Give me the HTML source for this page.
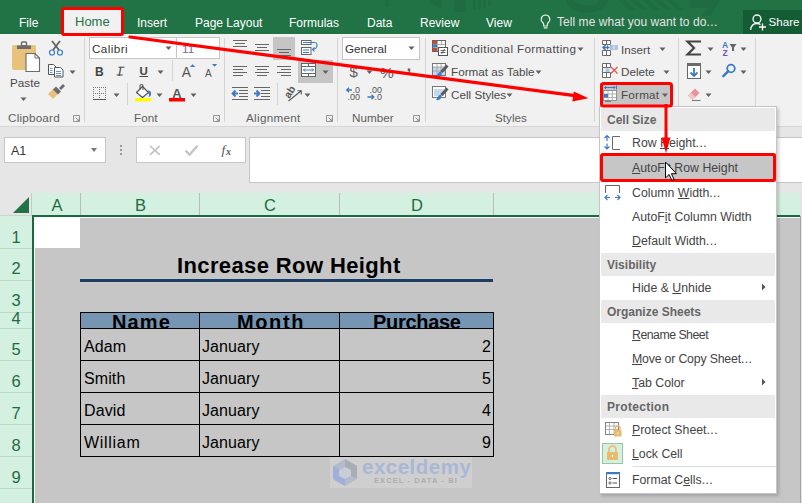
<!DOCTYPE html>
<html><head><meta charset="utf-8">
<style>
*{margin:0;padding:0;box-sizing:border-box}
html,body{width:802px;height:503px;overflow:hidden;background:#c6c6c6}
body{position:relative;font-family:"Liberation Sans",sans-serif;color:#444}
.a{position:absolute}
.t{position:absolute;white-space:pre;line-height:1}
#tabs{left:0;top:0;width:802px;height:34px;background:#217346}
.tab{position:absolute;top:16.5px;font-size:12px;color:#fff;white-space:pre;line-height:1}
#ribbon{left:0;top:34px;width:802px;height:93px;background:#f1f1f1;border-bottom:1px solid #d6d6d6}
.rl{position:absolute;font-size:11.7px;color:#4a4a4a;white-space:pre;line-height:1}
.gl{position:absolute;top:112px;font-size:11.7px;color:#606060;white-space:pre;line-height:1}
.sep{position:absolute;width:1px;background:#d4d4d4}
.dd{position:absolute;width:0;height:0;border-left:3.5px solid transparent;border-right:3.5px solid transparent;border-top:4px solid #5a5a5a}
#fbar{left:0;top:127px;width:802px;height:66px;background:#e6e6e6}
.colh{position:absolute;top:193px;height:22px;background:#d3f0e0;color:#1e6b41;font-size:13px}
.rowh{position:absolute;left:0;width:32px;background:#d3f0e0;color:#1e6b41;font-size:13px;border-bottom:1px solid #b9d6c6}
.cell{position:absolute;font-size:16px;letter-spacing:0.1px;color:#000;white-space:pre;line-height:1}
.menu{left:599px;top:106px;width:178px;height:388px;background:#fff;border:1px solid #c6c6c6;box-shadow:2px 2px 3px rgba(0,0,0,0.18)}
.mh{position:absolute;left:1px;width:174px;height:23px;background:#e9e9e9}
.mht{position:absolute;left:7px;font-size:12px;font-weight:bold;color:#666;white-space:pre;line-height:1}
.mi{position:absolute;left:32px;font-size:12.3px;color:#444;white-space:pre;line-height:1}
.red{position:absolute;border:3px solid #ff0000;border-radius:2px}
</style></head><body>

<!-- TAB BAR -->
<div id="tabs" class="a">

  <svg class="a" style="left:370px;top:0" width="370" height="34" viewBox="370 0 370 34">
   <g fill="#1f6c42">
    <rect x="385" y="0" width="4" height="7"/>
    <path d="M430 0h12v9l-12-6z"/>
    <rect x="454" y="0" width="12" height="12"/>
    <path d="M473 0h3v10h-3zM478 0h3v9h-3zM483 0h3v8h-3zM488 0h3v6h-3z"/>
    <path d="M566 0a20 12 0 0 0 42 0h-9a11 5 0 0 1-24 0z"/>
    <path d="M618 0l12 10h6l-12-10zM630 0l12 10h6l-12-10zM642 0l12 10h6l-12-10zM654 0l12 10h6l-12-10zM666 0l12 10h6l-12-10z"/>
    <path d="M690 0h30l-10 16h-8l6-8h-18z"/>
   </g>
  </svg>
  <div class="a" style="left:64px;top:10px;width:57px;height:24px;background:#f1f1f1"></div>
  <div class="tab" style="left:19px">File</div>
  <div class="tab" style="left:75px;top:14.8px;font-size:13px;color:#217346">Home</div>
  <div class="tab" style="left:137px">Insert</div>
  <div class="tab" style="left:195px">Page Layout</div>
  <div class="tab" style="left:289px">Formulas</div>
  <div class="tab" style="left:367px">Data</div>
  <div class="tab" style="left:420px">Review</div>
  <div class="tab" style="left:486px">View</div>
  <svg class="a" style="left:540px;top:13.5px" width="13" height="16" viewBox="0 0 13 16"><path d="M5.5 1a4.3 4.3 0 0 0-2.8 7.5c.6.6 1 1.3 1 2.2V12h3.6v-1.3c0-.9.4-1.6 1-2.2A4.3 4.3 0 0 0 5.5 1z M3.8 13.8h3.6" fill="none" stroke="#f0f0f0" stroke-width="1.2"/></svg>
  <div class="tab" style="left:557px;top:15.7px;color:#e4e4e4;letter-spacing:0.05px">Tell me what you want to do<span style="letter-spacing:0.4px">...</span></div>
  <div class="a" style="left:743px;top:10px;width:59px;height:24px;background:#145c34"></div>
  <svg class="a" style="left:749px;top:13px" width="18" height="18" viewBox="0 0 18 18"><circle cx="8" cy="6" r="4" fill="none" stroke="#fff" stroke-width="1.3"/><path d="M1.5 17c.5-4 3-6.5 6.5-6.5 1.5 0 2.6.4 3.5 1" fill="none" stroke="#fff" stroke-width="1.3"/><path d="M13.5 10.5v7M10 14h7" stroke="#fff" stroke-width="1.3"/></svg>
  <div class="tab" style="left:768.5px;top:15.8px;font-size:11.6px">Share</div>
</div>

<!-- RIBBON -->
<div id="ribbon" class="a"></div>


<!-- RIBBON CONTENT -->
<div class="a" style="left:89px;top:37px;width:88px;height:22px;background:#fff;border:1px solid #c6c6c6"></div>
<div class="a" style="left:176px;top:37px;width:44px;height:22px;background:#fff;border:1px solid #c6c6c6"></div>
<div class="a" style="left:342px;top:37px;width:78px;height:23px;background:#fff;border:1px solid #c6c6c6"></div>
<div class="a" style="left:273px;top:37px;width:22px;height:23px;background:#c5c5c5"></div>
<div class="a" style="left:298px;top:60px;width:35px;height:23px;background:#c5c5c5"></div>
<div class="a" style="left:600px;top:83px;width:72px;height:24px;background:#c5c5c5"></div>

<div class="sep" style="left:84px;top:38px;height:84px"></div>
<div class="sep" style="left:224px;top:38px;height:84px"></div>
<div class="sep" style="left:337px;top:38px;height:84px"></div>
<div class="sep" style="left:425px;top:38px;height:84px"></div>
<div class="sep" style="left:594px;top:38px;height:84px"></div>
<div class="sep" style="left:678px;top:38px;height:84px"></div>
<div class="sep" style="left:755px;top:38px;height:84px"></div>
<div class="sep" style="left:172px;top:60px;height:21px"></div>
<div class="sep" style="left:127px;top:83px;height:22px"></div>
<div class="sep" style="left:277px;top:83px;height:22px"></div>

<div class="rl" style="left:10px;top:77px">Paste</div>
<div class="rl" style="left:92px;top:43px;color:#333;letter-spacing:0.4px">Calibri</div>
<div class="rl" style="left:182px;top:43px;color:#7a6699">11</div>
<div class="rl" style="left:345px;top:43px;color:#333">General</div>
<div class="rl" style="left:451px;top:43px;letter-spacing:0.35px">Conditional Formatting</div>
<div class="rl" style="left:451px;top:66px">Format as Table</div>
<div class="rl" style="left:451px;top:89px">Cell Styles</div>
<div class="rl" style="left:621px;top:43.5px">Insert</div>
<div class="rl" style="left:621px;top:66px">Delete</div>
<div class="rl" style="left:621px;top:89px;letter-spacing:0.2px">Format</div>
<div class="gl" style="left:8px;letter-spacing:0.2px">Clipboard</div>
<div class="gl" style="left:134px">Font</div>
<div class="gl" style="left:246px;letter-spacing:0.3px">Alignment</div>
<div class="gl" style="left:352px">Number</div>
<div class="gl" style="left:495px">Styles</div>

<svg class="a" style="left:0;top:0" width="802" height="503" viewBox="0 0 802 503">
 <defs>
  <path id="dd" d="M0.5 0.5h6l-3 3.5z" fill="#606060"/>
  <path id="launch" d="M0.5 0.5h6v6h-6z M2.5 2.5l3.5 3.5 M6 3.5v2.5h-2.5" fill="none" stroke="#8a8a8a" stroke-width="0.9"/>
 </defs>
 <!-- dropdown arrows -->
 <use href="#dd" x="20" y="97"/>
 <use href="#dd" x="69" y="70"/>
 <use href="#dd" x="165" y="46"/>
 <use href="#dd" x="157" y="70"/>
 <use href="#dd" x="113" y="93"/>
 <use href="#dd" x="156" y="93"/>
 <use href="#dd" x="190" y="93"/>
 <use href="#dd" x="408" y="46"/>
 <use href="#dd" x="366" y="70"/>
 <use href="#dd" x="304" y="93"/>
 <use href="#dd" x="322" y="70"/>
 <use href="#dd" x="577" y="47"/>
 <use href="#dd" x="535" y="70"/>
 <use href="#dd" x="506" y="93"/>
 <use href="#dd" x="659" y="47"/>
 <use href="#dd" x="663" y="70"/>
 <use href="#dd" x="661.5" y="93"/>
 <use href="#dd" x="707" y="47"/>
 <use href="#dd" x="705" y="70"/>
 <use href="#dd" x="705" y="93"/>
 <use href="#dd" x="740" y="47"/>
 <use href="#dd" x="740" y="70"/>
 <!-- launchers -->
 <use href="#launch" x="73" y="115"/>
 <use href="#launch" x="213" y="115"/>
 <use href="#launch" x="326" y="115"/>
 <use href="#launch" x="413" y="115"/>

 <!-- paste -->
 <rect x="12" y="45" width="24" height="25" rx="2" fill="#e8c27b"/>
 <path d="M17 45.5h14v3.5h-14z" fill="#6b6b6b"/>
 <rect x="21.5" y="42" width="5" height="4" rx="1" fill="none" stroke="#6b6b6b" stroke-width="1.4"/>
 <path d="M26 53.5h9l4.5 4.5v13.5h-13.5z" fill="#fff" stroke="#6b6b6b" stroke-width="1.1"/>
 <path d="M35 53.5v4.5h4.5" fill="none" stroke="#6b6b6b" stroke-width="1"/>
 <!-- scissors -->
 <path d="M52 41l7 9 M60 41l-7 9" stroke="#606060" stroke-width="1.8"/>
 <circle cx="52" cy="52.5" r="2.5" fill="none" stroke="#3b7ac4" stroke-width="1.2"/>
 <circle cx="60" cy="52.5" r="2.5" fill="none" stroke="#3b7ac4" stroke-width="1.2"/>
  <!-- copy -->
 <path d="M48.5 64.5h5l2.5 2.5v7.5h-7.5z" fill="#fff" stroke="#555" stroke-width="1"/>
 <path d="M54.5 67.5h6l2.5 2.5v7h-8.5z" fill="#fff" stroke="#555" stroke-width="1"/>
 <path d="M50 68.5h2.5M50 70.5h2.5M50 72.5h2.5M56 71.5h5M56 73.5h5M56 75.5h5" stroke="#3b7ac4" stroke-width="0.8"/>
<!-- painter -->
 <path d="M48 94l5-5 5 5-5 5z" fill="#e8c27b"/>
 <path d="M53 89.5l3-3 5 5-3 3z" fill="#6b6b6b"/>
 <path d="M59 88l4-4 2 2-4 4z" fill="#6b6b6b"/>

 <!-- B I U -->
 <text x="95" y="75.5" font-family="Liberation Sans" font-weight="bold" font-size="12" fill="#444">B</text>
 <text x="118" y="75.5" font-family="Liberation Sans" font-style="italic" font-size="12.5" fill="#444">I</text><path d="M118.5 67.2h6M116.6 75h6" stroke="#444" stroke-width="1"/>
 <text x="139.5" y="75" font-family="Liberation Sans" font-weight="bold" font-size="11.5" fill="#444">U</text>
 <path d="M139.5 76.5h8.5" stroke="#444" stroke-width="1"/>
 <!-- grow/shrink -->
 <text x="181.8" y="77" font-family="Liberation Sans" font-size="13.8" fill="#555">A</text>
 <path d="M190 67l2.6-2.8 2.6 2.8z" fill="#3b7ac4"/>
 <text x="205" y="77" font-family="Liberation Sans" font-size="10" fill="#555">A</text>
 <path d="M212 64h5.2l-2.6 2.8z" fill="#3b7ac4"/>
 <!-- borders -->
 <path d="M93 87.5h13M93 93.5h13M93.5 87v12M99.5 87v12M105.5 87v12" stroke="#777" stroke-width="1" stroke-dasharray="1 1"/>
 <path d="M93 99.5h13" stroke="#555" stroke-width="1"/>
 <!-- fill -->
 <path d="M136.5 92.5l6-6 6 6-6 5z" fill="#fff" stroke="#555" stroke-width="1.2" stroke-linejoin="round"/>
 <path d="M140 89.5v-3.5a1.5 1.5 0 0 1 3 0v4" fill="none" stroke="#555" stroke-width="1.1"/>
 <path d="M148 90.5c2.5 0 3.5 2 3 4-.3 1.2-1.3 2.5-2.5 2.5.8-1.5.8-3-.5-4.5z" fill="#3b7ac4"/>
 <rect x="135" y="98" width="16" height="3.5" fill="#ffff00"/>
 <!-- font color -->
 <text x="172.3" y="97.6" font-family="Liberation Sans" font-weight="bold" font-size="13" fill="#5a5a5a">A</text>
 <rect x="169" y="98" width="16" height="3.5" fill="#ff0000"/>

 <!-- alignment -->
 <g stroke="#666" stroke-width="1">
  <path d="M233 40.5h14M235 43.5h10M233 46.5h14"/>
  <path d="M255 44.5h14M257 47.5h10M255 50.5h14"/>
  <path d="M277 49.5h14M279 52.5h10M277 55.5h14"/>
  <path d="M233 66.5h14M233 69.5h10M233 72.5h14M233 75.5h10"/>
  <path d="M255 66.5h14M257 69.5h10M255 72.5h14M257 75.5h10"/>
  <path d="M277 66.5h14M281 69.5h10M277 72.5h14M281 75.5h10"/>
  <path d="M232 87.5h16M239 90.5h9M239 93.5h9M239 96.5h9M232 99.5h16"/>
  <path d="M254 87.5h16M261 90.5h9M261 93.5h9M261 96.5h9M254 99.5h16"/>
 </g>
 <path d="M238 93.5h-5M235.5 90.5l-3 3 3 3" fill="none" stroke="#3b7ac4" stroke-width="1.8"/>
 <path d="M254 93.5h5M256.5 90.5l3 3-3 3" fill="none" stroke="#3b7ac4" stroke-width="1.8"/>
 <!-- wrap -->
 <rect x="301.5" y="40.5" width="9.5" height="4" fill="#fff" stroke="#666"/>
 <rect x="301.5" y="47.5" width="9.5" height="7" fill="#fff" stroke="#666"/>
 <path d="M303 42.5h12.5M303 50h6M303 52.5h6" stroke="#3b7ac4" stroke-width="1"/>
 <path d="M315.5 42.5c1.8.5 2 3.5.5 5.5-.8 1-2 1.5-3.5 1.5M314.5 47.5l-2 2 2 1.8" fill="none" stroke="#3b7ac4" stroke-width="1.1"/>
 <!-- merge -->
 <rect x="301.5" y="63.5" width="14" height="13" fill="#fff" stroke="#666"/>
 <path d="M301.5 66.5h14M301.5 73.5h14M308.5 63.5v3M308.5 73.5v3" stroke="#666"/>
 <path d="M303.5 70h10M305 68.5l-1.5 1.5 1.5 1.5M312 68.5l1.5 1.5-1.5 1.5" fill="none" stroke="#3b7ac4" stroke-width="1"/>
 <!-- orientation -->
 <text x="0" y="0" font-family="Liberation Sans" font-weight="bold" font-size="10.5" fill="#5a5a5a" transform="translate(289.5 99) rotate(-58)">ab</text>
 <path d="M288.5 101l12.5-10M297.5 90.8h3.8v3.6" fill="none" stroke="#555" stroke-width="1.1"/>
 <!-- number -->
 <text x="349.5" y="76.5" font-family="Liberation Sans" font-size="15" fill="#606060">$</text>
 <text x="380" y="77.5" font-family="Liberation Sans" font-size="15.5" fill="#606060">%</text>
 <text x="406.5" y="71" font-family="Liberation Sans" font-weight="bold" font-size="17" fill="#606060">,</text>
 <text x="352.5" y="93" font-family="Liberation Sans" font-size="9" fill="#555">.0</text>
 <text x="347.5" y="100" font-family="Liberation Sans" font-size="9" fill="#555">.00</text>
 <path d="M352 90h-5M349 87.8l-2.3 2.2 2.3 2.2" fill="none" stroke="#3b7ac4" stroke-width="1.3"/>
 <text x="369.5" y="93" font-family="Liberation Sans" font-size="9" fill="#555">.00</text>
 <text x="374.5" y="100" font-family="Liberation Sans" font-size="9" fill="#555">.0</text>
 <path d="M367.5 97h6M371.5 94.8l2.3 2.2-2.3 2.2" fill="none" stroke="#3b7ac4" stroke-width="1.3"/>

 <!-- styles icons -->
 <rect x="432.5" y="40.5" width="13" height="11" fill="#fff" stroke="#666"/>
 <path d="M433 44.5h12M433 48h12M437.5 41v10M441.5 41v4" stroke="#999" stroke-width="0.8"/>
 <rect x="433" y="41" width="4" height="3" fill="#d24726"/><rect x="433" y="44.5" width="4" height="3" fill="#3b7ac4"/><rect x="433" y="48" width="4" height="3" fill="#d24726"/>
 <rect x="438.5" y="47.5" width="9" height="8" fill="#fff" stroke="#555"/>
 <path d="M440.5 50.5h5M440.5 52.5h5M444.5 49l-3 5" stroke="#444" stroke-width="0.8"/>

 <rect x="432.5" y="63.5" width="13" height="12" fill="#fff" stroke="#777"/>
 <rect x="433" y="67" width="12" height="8" fill="#c5d9ee"/>
 <path d="M433 67h12M433 71h12M437 64v11M441 64v11" stroke="#999" stroke-width="0.8"/>
 <path d="M447.5 65.5l-6 6.5" stroke="#5a5a5a" stroke-width="3"/>
 <path d="M441.5 71.5c-2 0-3.5 1.5-4 3l-1.5 2.5c2 .5 4.5-.5 5.5-2.5z" fill="#3b7ac4"/>

 <rect x="432.5" y="86.5" width="13" height="11" fill="#fff" stroke="#777"/>
 <rect x="434" y="89" width="10" height="7" fill="#c5d9ee"/>
 <path d="M447.5 88.5l-6 6.5" stroke="#5a5a5a" stroke-width="3"/>
 <path d="M441.5 94.5c-2 0-3.5 1.5-4 3l-1.5 2.5c2 .5 4.5-.5 5.5-2.5z" fill="#3b7ac4"/>

 <!-- cells icons -->
 <g fill="#fff" stroke="#6a6a6a" stroke-width="1">
  <path d="M602.5 40.5h8v4h-8zM606.5 40.5v4"/>
  <path d="M602.5 50.5h8v5h-8zM606.5 50.5v5"/>
  <path d="M607.5 45.5v4"/>
  <path d="M602.5 63.5h8v4h-8zM606.5 63.5v4"/>
  <path d="M602.5 72.5h8v5h-8zM606.5 72.5v5"/>
  <path d="M602.5 67.5v5"/>
 </g>
 <rect x="610.5" y="45.5" width="7" height="4" fill="#a9c6e8" stroke="#8fb0d8" stroke-width="0.6"/>
 <path d="M614 45.5v4" stroke="#fff" stroke-width="0.8"/>
 <path d="M609.5 47.5h-6.5M605.5 45l-2.5 2.5 2.5 2.5" fill="none" stroke="#3b7ac4" stroke-width="1.4"/>
 <rect x="605.5" y="68.5" width="4" height="3.5" fill="#a9c6e8"/>
 <path d="M611 67l6.5 6.5M617.5 67l-6.5 6.5" stroke="#e05a5a" stroke-width="1.4"/>
 <rect x="603.5" y="90.5" width="13" height="10" fill="#fff" stroke="#888" stroke-width="0.9"/>
 <path d="M603.5 94h13M603.5 97.5h13M608 90.5v10M612.3 90.5v10" stroke="#a0a0a0" stroke-width="0.8"/>
 <rect x="604" y="94" width="4" height="3.5" fill="#3b7ac4"/>
 <path d="M605 101.5h6" stroke="#777" stroke-width="0.9"/>
 <path d="M604.5 87.5h10.5M606 86l-1.5 1.5 1.5 1.5M613.5 86l1.5 1.5-1.5 1.5M616.5 85.5v4" fill="none" stroke="#3b7ac4" stroke-width="1"/>
 <!-- editing icons -->
 <path d="M701 41.5h-13.5l6.5 6.5-6.5 6.5h13.5" fill="none" stroke="#444" stroke-width="2.2"/>
 <text x="722" y="47.5" font-family="Liberation Sans" font-weight="bold" font-size="8.5" fill="#3b7ac4">A</text>
 <text x="722.5" y="55.5" font-family="Liberation Sans" font-weight="bold" font-size="8.5" fill="#7a52a8">Z</text>
 <path d="M729.5 44h7l-2.5 3.5v3.5h-2v-3.5z" fill="#666"/>
 <rect x="687.5" y="63.5" width="13" height="15" fill="#fff" stroke="#666"/>
 <rect x="687" y="63" width="14" height="3" fill="#6b6b6b"/>
 <path d="M694 68v8M690.5 72.5l3.5 3.5 3.5-3.5" fill="none" stroke="#3b7ac4" stroke-width="1.8"/>
 <circle cx="731" cy="68.5" r="3.8" fill="none" stroke="#3b7ac4" stroke-width="1.8"/>
 <path d="M728.3 71.2l-5 5" stroke="#3b7ac4" stroke-width="2.4" stroke-linecap="round"/>
 <path d="M688 95.5l7-7 4.5 4.5-7 7z" fill="#e8949a"/>
 <path d="M688 95.5l3 -3 4.5 4.5-3 3z" fill="#f2c4c8"/>
 <path d="M692 100.5h8.5" stroke="#777" stroke-width="1"/>
</svg>

<!-- FORMULA BAR AREA -->
<div id="fbar" class="a">
  <div class="a" style="left:4px;top:10px;width:102px;height:26px;background:#fff;border:1px solid #c6c6c6"></div>
  <div class="t" style="left:11px;top:18px;font-size:12.5px;color:#333">A1</div>
  <div class="dd" style="left:91px;top:21px;border-top-color:#777"></div>
  <div class="a" style="left:120px;top:18px;width:2px;height:2px;background:#999;box-shadow:0 4px 0 #999,0 8px 0 #999"></div>
  <div class="a" style="left:136px;top:10px;width:110px;height:26px;background:#fff;border:1px solid #c6c6c6"></div>
  <div class="a" style="left:249px;top:10px;width:560px;height:46px;background:#fff;border:1px solid #c6c6c6"></div>
</div>

<!-- HEADERS -->
<div class="a" style="left:0;top:193px;width:32px;height:22px;background:#e6e6e6"></div>
<svg class="a" style="left:12px;top:197px" width="18" height="17"><path d="M1 16L17 0V16Z" fill="#217346"/></svg>
<div class="colh" style="left:32px;width:802px"></div>


<!-- COLUMN HEADER SEPARATORS & LABELS -->
<div class="a" style="left:80px;top:193px;width:1px;height:22px;background:#bcbcbc"></div>
<div class="a" style="left:199px;top:193px;width:1px;height:22px;background:#bcbcbc"></div>
<div class="a" style="left:339px;top:193px;width:1px;height:22px;background:#bcbcbc"></div>
<div class="a" style="left:493px;top:193px;width:1px;height:22px;background:#bcbcbc"></div>
<div class="a" style="left:32px;top:215px;width:768px;height:2px;background:#186b3c"></div>

<!-- ROW HEADERS -->
<div class="a" style="left:0;top:215px;width:32px;height:288px;background:#d3f0e0"></div>
<div class="a" style="left:0;top:248px;width:32px;height:1px;background:#bcd9c8"></div>
<div class="a" style="left:0;top:280px;width:32px;height:1px;background:#bcd9c8"></div>
<div class="a" style="left:0;top:312px;width:32px;height:1px;background:#bcd9c8"></div>
<div class="a" style="left:0;top:328px;width:32px;height:1px;background:#bcd9c8"></div>
<div class="a" style="left:0;top:360px;width:32px;height:1px;background:#bcd9c8"></div>
<div class="a" style="left:0;top:392px;width:32px;height:1px;background:#bcd9c8"></div>
<div class="a" style="left:0;top:424px;width:32px;height:1px;background:#bcd9c8"></div>
<div class="a" style="left:0;top:456px;width:32px;height:1px;background:#bcd9c8"></div>
<div class="a" style="left:0;top:488px;width:32px;height:1px;background:#bcd9c8"></div>
<div class="t" style="left:33px;width:48px;text-align:center;top:196.5px;font-size:16.5px;color:#1e6b41">A</div>
<div class="t" style="left:81px;width:119px;text-align:center;top:196.5px;font-size:16.5px;color:#1e6b41">B</div>
<div class="t" style="left:200px;width:140px;text-align:center;top:196.5px;font-size:16.5px;color:#1e6b41">C</div>
<div class="t" style="left:340px;width:154px;text-align:center;top:196.5px;font-size:16.5px;color:#1e6b41">D</div>
<div class="t" style="left:0;width:32px;text-align:center;top:228.6px;font-size:16.5px;color:#1e6b41">1</div>
<div class="t" style="left:0;width:32px;text-align:center;top:259.6px;font-size:16.5px;color:#1e6b41">2</div>
<div class="t" style="left:0;width:32px;text-align:center;top:292.3px;font-size:16.5px;color:#1e6b41">3</div>
<div class="t" style="left:0;width:32px;text-align:center;top:309.7px;font-size:16.5px;color:#1e6b41">4</div>
<div class="t" style="left:0;width:32px;text-align:center;top:341.3px;font-size:16.5px;color:#1e6b41">5</div>
<div class="t" style="left:0;width:32px;text-align:center;top:373.3px;font-size:16.5px;color:#1e6b41">6</div>
<div class="t" style="left:0;width:32px;text-align:center;top:405px;font-size:16.5px;color:#1e6b41">7</div>
<div class="t" style="left:0;width:32px;text-align:center;top:437px;font-size:16.5px;color:#1e6b41">8</div>
<div class="t" style="left:0;width:32px;text-align:center;top:469px;font-size:16.5px;color:#1e6b41">9</div>
<div class="a" style="left:32px;top:215px;width:2px;height:288px;background:#186b3c"></div>

<!-- SHEET -->
<div class="a" style="left:34px;top:217px;width:766px;height:1px;background:#fff"></div>
<div class="a" style="left:34px;top:217px;width:1px;height:286px;background:#fff"></div>
<div class="a" style="left:34px;top:217px;width:46px;height:31px;background:#fff"></div>
<div class="a" style="left:0;top:215px;width:32px;height:1px;background:#c4d9cc"></div>
<div class="a" style="left:31px;top:193px;width:1px;height:22px;background:#c8c8c8"></div>
<div class="t" style="left:177px;top:255px;font-size:22px;letter-spacing:0.38px;font-weight:bold;color:#000">Increase Row Height</div>
<div class="a" style="left:80px;top:279px;width:413px;height:3px;background:#1e3d62"></div>

<!-- TABLE -->
<div class="a" style="left:80px;top:312px;width:414px;height:145px;border:1px solid #000;overflow:hidden">
  <div class="a" style="left:0;top:0;width:412px;height:15px;background:#7695b3;overflow:hidden">
    <div class="t" style="left:31px;top:-1px;font-size:20px;letter-spacing:1.1px;font-weight:bold;color:#000">Name</div>
    <div class="t" style="left:156px;top:-1px;font-size:20px;letter-spacing:1.6px;font-weight:bold;color:#000">Month</div>
    <div class="t" style="left:292px;top:-1px;font-size:20px;letter-spacing:-0.3px;font-weight:bold;color:#000">Purchase</div>
  </div>
  <div class="a" style="left:0;top:15px;width:412px;height:1px;background:#000"></div>
  <div class="a" style="left:0;top:47px;width:412px;height:1px;background:#000"></div>
  <div class="a" style="left:0;top:79px;width:412px;height:1px;background:#000"></div>
  <div class="a" style="left:0;top:111px;width:412px;height:1px;background:#000"></div>
  <div class="a" style="left:118px;top:0;width:1px;height:143px;background:#000"></div>
  <div class="a" style="left:258px;top:0;width:1px;height:143px;background:#000"></div>
</div>
<div class="cell" style="left:84px;top:338.5px">Adam</div>
<div class="cell" style="left:84px;top:370.5px">Smith</div>
<div class="cell" style="left:84px;top:402.5px">David</div>
<div class="cell" style="left:84px;top:434.5px;letter-spacing:0.7px">William</div>
<div class="cell" style="left:202px;top:338.5px">January</div>
<div class="cell" style="left:202px;top:370.5px">January</div>
<div class="cell" style="left:202px;top:402.5px">January</div>
<div class="cell" style="left:202px;top:434.5px">January</div>
<div class="cell" style="left:482px;top:338.5px">2</div>
<div class="cell" style="left:482px;top:370.5px">5</div>
<div class="cell" style="left:482px;top:402.5px">4</div>
<div class="cell" style="left:482px;top:434.5px">9</div>


<!-- RIGHT EDGE -->
<div class="a" style="left:800px;top:193px;width:2px;height:310px;background:#e3e3e3"></div>
<div class="a" style="left:800px;top:216px;width:1px;height:287px;background:#a3a3a3"></div>
<!-- WATERMARK -->
<div class="a" style="left:330px;top:457px;width:142px;height:31px;background:#cfcfcf"></div>
<svg class="a" style="left:331px;top:458px" width="28" height="29" viewBox="0 0 28 29"><path d="M14 1L26 8V21L14 28L2 21V8Z" fill="#b4bccb"/><path d="M14 1L26 8V21L14 14Z" fill="#a9adb5"/><path d="M2 8L14 14V28L2 21Z" fill="#9fb0d8"/><path d="M8 12L14 9L20 12V18L14 21L8 18Z" fill="#c9cdd6"/></svg>
<div class="t" style="left:362px;top:457px;font-size:20.5px;font-weight:bold;color:#a9b7d6;letter-spacing:0.5px">exceldemy</div>
<div class="t" style="left:374px;top:477px;font-size:7.5px;font-weight:bold;color:#adadad;letter-spacing:1.1px">EXCEL - DATA - BI</div>

<!-- MENU -->
<div class="a menu">
  <div class="mh" style="top:1px"></div>
  <div class="mht" style="top:7px">Cell Size</div>
  <div class="mi" style="top:30px">Row <u>H</u>eight<span style="letter-spacing:0.4px">...</span></div>
  <div class="a" style="left:2px;top:46px;width:175px;height:29px;background:#c6c6c6"></div>
  <div class="mi" style="top:55px"><u>A</u>utoFit Row Height</div>
  <div class="mi" style="top:80px">Column <u>W</u>idth<span style="letter-spacing:0.4px">...</span></div>
  <div class="mi" style="top:104px">AutoF<u>i</u>t Column Width</div>
  <div class="mi" style="top:128px"><u>D</u>efault Width<span style="letter-spacing:0.4px">...</span></div>
  <div class="mh" style="top:146px"></div>
  <div class="mht" style="top:152px">Visibility</div>
  <div class="mi" style="top:175px">Hide &amp; <u>U</u>nhide</div>
  <div class="mh" style="top:193px"></div>
  <div class="mht" style="top:199px">Organize Sheets</div>
  <div class="mi" style="top:222px;letter-spacing:-0.5px"><u>R</u>ename Sheet</div>
  <div class="mi" style="top:246px;letter-spacing:-0.18px"><u>M</u>ove or Copy Sheet<span style="letter-spacing:0.4px">...</span></div>
  <div class="mi" style="top:270px"><u>T</u>ab Color</div>
  <div class="mh" style="top:288px"></div>
  <div class="mht" style="top:294px;letter-spacing:0.3px">Protection</div>
  <div class="mi" style="top:317px"><u>P</u>rotect Sheet<span style="letter-spacing:0.4px">...</span></div>
  <div class="mi" style="top:341px"><u>L</u>ock Cell</div>
  <div class="a" style="left:33px;top:359px;width:143px;height:1px;background:#d9dde4"></div>
  <div class="mi" style="top:367px">Format C<u>e</u>lls<span style="letter-spacing:0.4px">...</span></div>
</div>


<!-- MENU ICONS + OVERLAYS -->
<svg class="a" style="left:0;top:0" width="802" height="503" viewBox="0 0 802 503">
 <!-- row height icon -->
 <path d="M607 135.5v5.5M604.5 138l2.5-2.5 2.5 2.5M607 143.5v5.5M604.5 146.5l2.5 2.5 2.5-2.5" fill="none" stroke="#3b7ac4" stroke-width="1.2"/>
 <path d="M620 136.5h-7.5v13h7.5" fill="none" stroke="#6a6a6a" stroke-width="1"/>
 <!-- column width icon -->
 <path d="M605.5 193v-7.5h14v7.5" fill="none" stroke="#666" stroke-width="1"/>
 <path d="M605 197.5h5M607.5 195l-2.5 2.5 2.5 2.5M615 197.5h5M617.5 195l2.5 2.5-2.5 2.5" fill="none" stroke="#3b7ac4" stroke-width="1.1"/>
 <!-- submenu arrows -->
 <path d="M762 283.5l3.5 3.5-3.5 3.5z" fill="#555"/>
 <path d="M762 378.5l3.5 3.5-3.5 3.5z" fill="#555"/>
 <!-- protect sheet icon -->
 <rect x="605.5" y="422.5" width="13" height="12" fill="#fff" stroke="#777" stroke-width="0.9"/>
 <path d="M605.5 426h13M605.5 429.5h13M609.5 422.5v12M614 422.5v12" stroke="#999" stroke-width="0.7"/>
 <rect x="614" y="430" width="7.5" height="6.5" rx="1" fill="#e9b96e"/>
 <path d="M615.5 430v-1.8a2.3 2.3 0 0 1 4.6 0v1.8" fill="none" stroke="#e9b96e" stroke-width="1.3"/>
 <path d="M617.8 432.3v2" stroke="#fff" stroke-width="1"/>
 <!-- lock cell icon -->
 <rect x="602.5" y="443.5" width="20" height="20" fill="#d9eedd" stroke="#8fcaa0" stroke-width="1"/>
 <rect x="607" y="452" width="11" height="8" rx="1" fill="#e9b96e"/>
 <path d="M609 452v-2.5a3.5 3.5 0 0 1 7 0v2.5" fill="none" stroke="#e9b96e" stroke-width="1.6"/>
 <path d="M612.5 455v2" stroke="#fff" stroke-width="1.2"/>
 <!-- format cells icon -->
 <rect x="606.5" y="472.5" width="13" height="15" fill="#fff" stroke="#666" stroke-width="1"/>
 <rect x="606" y="472" width="14" height="2.2" fill="#3b7ac4"/>
 <circle cx="610" cy="478.5" r="1.1" fill="none" stroke="#555" stroke-width="0.9"/>
 <circle cx="610" cy="483" r="1.1" fill="none" stroke="#555" stroke-width="0.9"/>
 <path d="M612.5 478.5h4.5M612.5 483h4.5" stroke="#555" stroke-width="1"/>
 <!-- formula bar buttons -->
 <path d="M150 145.8l9.8 9M159.8 145.8l-9.8 9" stroke="#c4c4c4" stroke-width="1.6"/>
 <path d="M185.5 150.5l4 4.3 8-9" fill="none" stroke="#c4c4c4" stroke-width="2.3"/>
 <text x="221.5" y="154" font-family="Liberation Serif" font-style="italic" font-size="13.5" fill="#555">f</text>
 <text x="226" y="155" font-family="Liberation Serif" font-style="italic" font-weight="bold" font-size="10" fill="#555">x</text>

 <!-- red boxes -->
 <rect x="62.5" y="8.5" width="60" height="26" rx="1.5" fill="none" stroke="#ff0000" stroke-width="3"/>
 <rect x="601.5" y="83.5" width="70" height="22.5" rx="2" fill="none" stroke="#ff0000" stroke-width="3"/>
 <rect x="601.5" y="154.5" width="173" height="26" rx="1.5" fill="none" stroke="#ff0000" stroke-width="3"/>
 <!-- red arrows -->
 <path d="M130 37L575 95.6" stroke="#ff0000" stroke-width="3.2" stroke-linecap="round"/>
 <path d="M588.5 98.3L573.8 91.5L572.3 101.5Z" fill="#ff0000"/>
 <path d="M666 104V140" stroke="#ff0000" stroke-width="3"/>
 <path d="M666 153L661.5 137.5H670.5Z" fill="#ff0000"/>
 <!-- cursor -->
 <path d="M665.5 162v16l3.6-3.5 2.8 5.8 2.2-1-2.7-5.6h5.1z" fill="#fff" stroke="#000" stroke-width="1"/>
</svg>

</body></html>
